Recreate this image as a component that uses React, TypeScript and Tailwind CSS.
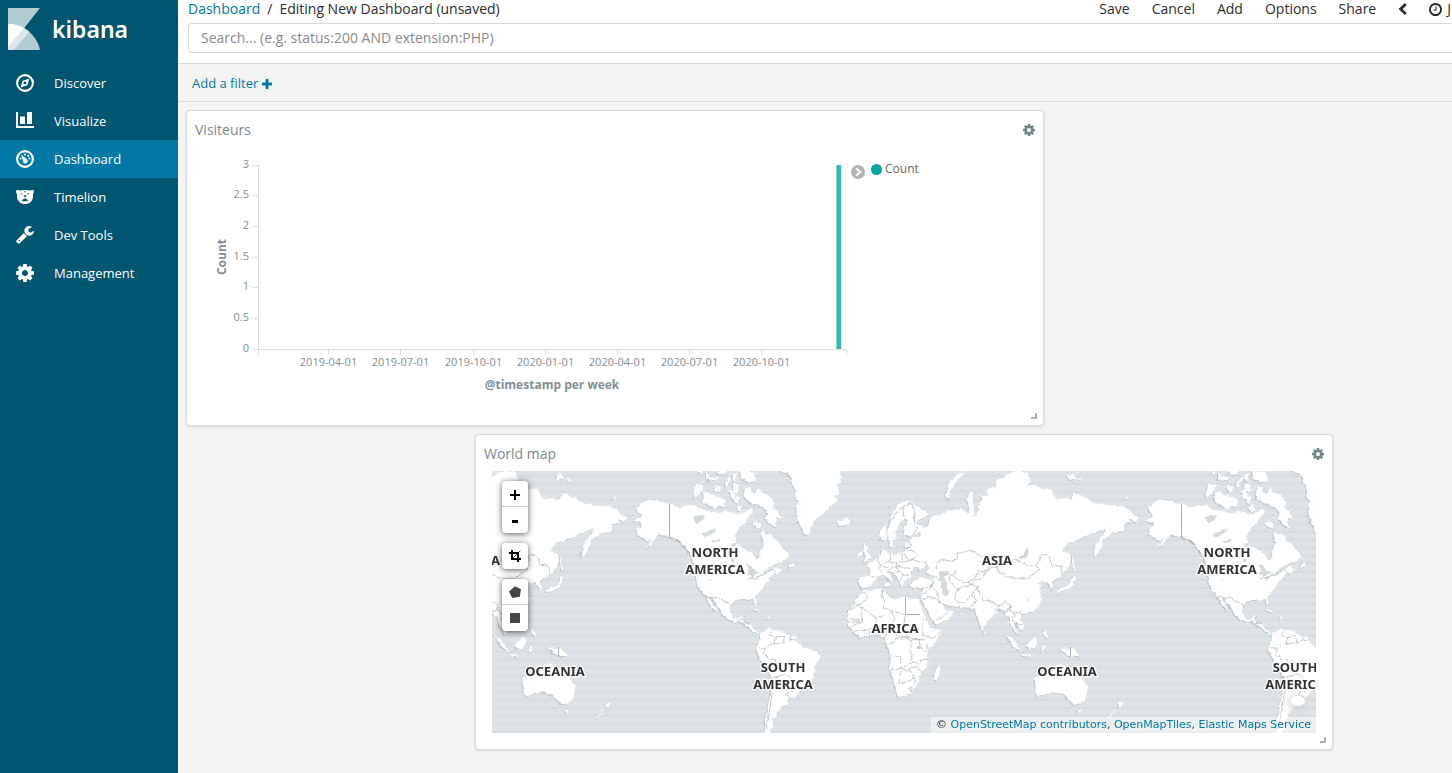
import React from "react";

const LOGO = (
  <svg width="32" height="42" viewBox="0 0 32 42" aria-hidden="true" className="shrink-0">
    <path d="M0 0H32L16.3 20C11.5 17 6 15.5 0 15.5Z" fill="#b2ccd4" />
    <path d="M0 15.5C6 15.5 11.5 17 16.3 20C24 25 30.5 33 32 42H0Z" fill="#b2ccd4" />
    <path d="M16.3 20L21.5 23.8L6 42H0V38Z" fill="#d9e6ea" />
    <path d="M0 15.5C6 15.5 11.5 17 16.3 20L0 39Z" fill="#fff" />
  </svg>
);

const GEAR =
  "M1024 896q0-106-75-181t-181-75-181 75-75 181 75 181 181 75 181-75 75-181zm512-109v222q0 12-8 23t-20 13l-185 28q-19 54-39 91 35 50 107 138 10 12 10 25t-9 23q-27 37-99 108t-94 71q-12 0-26-9l-138-108q-44 23-91 38-16 136-29 186-7 28-36 28h-222q-14 0-24.5-8.5t-11.5-21.5l-28-184q-49-16-90-37l-141 107q-10 9-25 9-14 0-25-11-126-114-165-168-7-10-7-23 0-12 8-23 15-21 51-66.5t54-70.5q-27-50-41-99l-183-27q-13-2-21-12.5t-8-23.5v-222q0-12 8-23t19-13l186-28q14-46 39-92-40-57-107-138-10-12-10-24 0-10 9-23 26-36 98.5-107.5t94.5-71.5q13 0 26 10l138 107q44-23 91-38 16-136 29-186 7-28 36-28h222q14 0 24.5 8.5t11.5 21.5l28 184q49 16 90 37l142-107q9-9 24-9 13 0 25 10 129 119 165 170 7 8 7 22 0 12-8 23-15 21-51 66.5t-54 70.5q26 50 41 98l183 28q13 2 21 12.5t8 23.5z";

const CLOCK =
  "M896 544v448q0 14-9 23t-23 9h-320q-14 0-23-9t-9-23v-64q0-14 9-23t23-9h224v-352q0-14 9-23t23-9h64q14 0 23 9t9 23zm416 352q0-148-73-273t-198-198-273-73-273 73-198 198-73 273 73 273 198 198 273 73 273-73 198-198 73-273zm224 0q0 209-103 385.5t-279.5 279.5-385.5 103-385.5-103-279.5-279.5-103-385.5 103-385.5 279.5-279.5 385.5-103 385.5 103 279.5 279.5 103 385.5z";

const WRENCH =
  "M384 1472q0-26-19-45t-45-19-45 19-19 45 19 45 45 19 45-19 19-45zm644-420l-682 682q-37 37-90 37-52 0-91-37l-106-108q-38-36-38-90 0-53 38-91l681-681q39 98 114.5 173.5t173.5 114.5zm634-435q0 39-23 106-47 134-164.5 217.5t-258.5 83.5q-185 0-316.5-131.5t-131.5-316.5 131.5-316.5 316.5-131.5q58 0 121.5 16.5t107.5 46.5q16 11 16 28t-16 28l-293 169v224l193 107q5-3 79-48.5t135.5-81 70.5-35.5q15 0 23.5 10t8.5 25z";

function GearIcon({ size }: { size: number }) {
  return (
    <svg width={size} height={size} viewBox="0 128 1536 1536" fill="currentColor" aria-hidden="true">
      <path d={GEAR} />
    </svg>
  );
}

const NAV: { label: string; icon: React.ReactNode; active?: boolean }[] = [
  {
    label: "Discover",
    icon: (
      <svg width="18" height="18" viewBox="0 0 18 18" aria-hidden="true">
        <circle cx="9" cy="9" r="7.9" fill="none" stroke="#fff" strokeWidth="2.1" />
        <path fillRule="evenodd" fill="#fff" d="M13.4 4.4L11.4 11.2L4.6 13.6L6.6 6.8ZM9 7.6A1.4 1.4 0 1 0 9 10.4A1.4 1.4 0 1 0 9 7.6Z" />
      </svg>
    ),
  },
  {
    label: "Visualize",
    icon: (
      <svg width="18" height="18" viewBox="0 0 18 18" fill="#fff" aria-hidden="true">
        <path d="M0 0H2V14H18V16H0ZM4 4.5H9V12H4ZM11 0H16V12H11Z" />
      </svg>
    ),
  },
  {
    label: "Dashboard",
    active: true,
    icon: (
      <svg width="18" height="18" viewBox="0 0 18 18" aria-hidden="true">
        <circle cx="9" cy="9" r="7.9" fill="none" stroke="#fff" strokeWidth="2.1" />
        <g fill="#fff">
          <path d="M5.2 4.4L10.8 9.2A2.4 2.4 0 1 1 7 11Z" />
          <circle cx="9" cy="4.6" r="1" />
          <circle cx="12.2" cy="5.8" r="1.1" />
          <circle cx="13.4" cy="8.6" r="1" />
          <circle cx="4.7" cy="8.4" r="1" />
        </g>
      </svg>
    ),
  },
  {
    label: "Timelion",
    icon: (
      <svg width="18" height="18" viewBox="0 0 18 18" aria-hidden="true">
        <path fill="#fff" d="M0 3.2C0 1.8 2.2 1.6 3.8 2.6C7 1.9 11 1.9 14.2 2.6C15.8 1.6 18 1.8 18 3.2C18 4.6 17.2 5.6 17 6.5C17.4 9.6 16.6 12.4 14.6 14C13 15.4 11 16 9 16C7 16 5 15.4 3.4 14C1.4 12.4 .6 9.6 1 6.5C.8 5.6 0 4.6 0 3.2Z" />
        <g fill="#005571">
          <path d="M4.8 4.9L6.8 5.8L6.4 6.6L4.6 5.7ZM13.2 4.9L11.2 5.8L11.6 6.6L13.4 5.7ZM7.4 7.2H10.6L9.4 9.2H8.6ZM9 10.4C10.4 10.4 11.8 11.6 12 13.2H6C6.2 11.6 7.6 10.4 9 10.4Z" />
          <path d="M8 3.2H10L9 4.4Z" />
        </g>
      </svg>
    ),
  },
  {
    label: "Dev Tools",
    icon: (
      <svg width="18" height="18" viewBox="0 128 1664 1664" fill="#fff" aria-hidden="true">
        <path d={WRENCH} />
      </svg>
    ),
  },
  { label: "Management", icon: <GearIcon size={18} /> },
];

const ACTIONS = ["Save", "Cancel", "Add", "Options", "Share"];

const Y_TICKS = [
  { y: 165.5, label: "3" },
  { y: 195.5, label: "2.5" },
  { y: 226.5, label: "2" },
  { y: 257.5, label: "1.5" },
  { y: 287.5, label: "1" },
  { y: 318.5, label: "0.5" },
  { y: 349.5, label: "0" },
];

const X_TICKS = [
  { x: 328.5, label: "2019-04-01" },
  { x: 400.5, label: "2019-07-01" },
  { x: 473.5, label: "2019-10-01" },
  { x: 545.5, label: "2020-01-01" },
  { x: 617.5, label: "2020-04-01" },
  { x: 689.5, label: "2020-07-01" },
  { x: 761.5, label: "2020-10-01" },
];

function VisitorsChart() {
  return (
    <svg width="653" height="250" viewBox="195 151 653 250" role="img" aria-label="Count per week" className="shrink-0">
      <g stroke="#dcdcdc" fill="none">
        <path d="M258.5 165V355M258 349.5H846.5V355" />
        {Y_TICKS.map((t) => (
          <path key={t.label} d={`M252 ${t.y}H258`} />
        ))}
        {X_TICKS.map((t) => (
          <path key={t.label} d={`M${t.x} 350V355`} />
        ))}
      </g>
      <rect x="836.4" y="165" width="4.8" height="184" fill="#33b9b1" />
      <g fontSize="11" fill="#848e96">
        {Y_TICKS.map((t) => (
          <text key={t.label} x="249" y={t.y + 2.5} textAnchor="end">
            {t.label}
          </text>
        ))}
        {X_TICKS.map((t) => (
          <text key={t.label} x={t.x} y="366" textAnchor="middle">
            {t.label}
          </text>
        ))}
      </g>
      <g fontSize="12" fontWeight="700" fill="#848e96" textAnchor="middle">
        <text x="552" y="389">@timestamp per week</text>
        <text transform="translate(226 257) rotate(-90)">Count</text>
      </g>
    </svg>
  );
}

const AMERICAS = [
  "M148 118L128 112L108 108L90 104L74 108L62 118L56 126L46 130L56 142L66 150L60 158L40 166L48 170L62 174L66 184L52 190L50 206L60 214L72 222L82 228L96 220L84 238L66 252L92 240L110 216L118 208L134 214L148 216L162 226L172 224L190 240L206 262L216 282L224 296L228 330L230 356L240 376L252 386L258 396L268 416L284 436L292 442L280 420L268 398L276 398L288 416L300 434L308 450L322 462L344 470L358 468L372 478L388 490L400 500L418 506L410 498L398 490L392 478L380 476L370 474L366 466L378 450L360 456L352 464L338 456L330 440L332 424L340 412L356 406L376 404L392 404L400 402L406 422L411 414L404 396L418 380L430 370L434 358L446 348L450 338L462 326L474 324L486 316L478 312L474 304L456 312L440 326L420 330L434 318L450 306L470 296L496 288L510 274L504 262L486 250L476 232L462 226L452 208L440 210L432 200L424 206L430 230L424 250L418 262L418 280L408 284L400 268L384 256L366 248L350 238L344 220L350 200L362 184L376 172L384 158L398 142L396 130L380 138L364 146L348 150L336 142L316 138L300 146L280 140L256 136L240 130L226 122L204 120L186 126L168 126Z",
  "M246 84L262 80L276 92L300 96L318 108L312 126L296 122L284 132L268 120L250 112Z",
  "M228 56L250 60L248 76L232 92L222 98L220 82Z",
  "M376 66L392 66L394 82L404 86L414 68L422 82L440 88L456 100L462 116L458 130L472 136L482 160L466 160L472 190L456 180L448 172L436 160L444 146L432 130L414 120L398 116L380 104L370 92Z",
  "M360 18L400 22L408 48L386 52L364 42Z",
  "M328 78L342 74L348 104L332 98ZM312 60L330 30L332 42L318 66ZM258 20L272 36L296 36L290 46L258 44ZM234 18L250 18L246 28ZM290 18L320 18L314 26L296 28ZM338 56L356 58L352 84L342 80ZM346 96L358 94L352 118L344 112ZM286 60L304 66L298 82L284 72ZM338 28L350 26L346 50L338 46Z",
  "M398 174L410 168L424 176L420 188L406 186ZM352 128L364 120L366 138L354 138Z",
  "M506 300L516 292L522 304L508 308Z",
  "M652 164L664 168L684 158L690 172L672 184L656 178Z",
  "M478 14L484 22L500 24L512 36L520 60L526 80L522 96L536 106L528 120L530 150L540 180L556 210L566 212L572 186L582 168L604 152L616 140L636 124L652 108L646 96L656 84L656 70L650 60L662 50L662 14Z",
  "M392 426L410 434L430 444L412 440ZM440 452L454 458L444 462Z",
  "M0 152L12 152L20 160L10 170L0 166Z",
  "M420 504L432 500L446 490L456 496L480 494L492 504L508 512L524 516L534 534L550 548L572 554L590 560L600 572L598 584L584 604L582 632L574 656L560 668L540 676L528 692L514 700L504 702L504 716L486 724L478 738L466 744L470 756L456 764L460 780L450 800L456 812L430 812L436 792L434 764L440 744L444 720L450 690L452 660L456 640L446 622L432 610L424 590L414 566L408 552L414 536L420 520Z",
].join("");

const AMERICAN_LAKES =
  "M218 156L236 150L256 152L248 166L230 174L222 166ZM244 206L262 200L276 192L292 194L278 204L262 212L248 214ZM274 226L302 222L296 230L276 230ZM336 236L350 236L346 246L338 244ZM336 280L344 282L342 292L337 290ZM376 296L392 302L404 314L416 326L402 330L396 342L390 326L382 334L386 314ZM404 336L420 332L410 342L400 344ZM266 342L276 346L272 350Z";

const OLD_WORLD = [
  "M118 200L122 222L134 228L144 222L150 246L158 246L160 230L170 222L166 204L176 180L192 160L204 166L196 184L190 208L206 214L222 210L244 200L240 212L212 220L210 232L196 234L196 246L190 262L170 266L150 268L136 260L128 244L126 264L116 270L104 286L80 300L90 310L88 332L60 336L56 352L62 368L78 370L92 362L102 346L114 334L128 328L140 338L156 354L158 346L146 330L142 322L152 318L166 330L178 346L184 366L190 352L200 344L212 336L214 322L222 308L232 306L236 316L248 312L262 300L264 312L258 322L282 334L280 344L262 342L240 340L214 350L210 362L226 368L246 370L246 386L242 404L252 416L262 434L274 460L286 480L304 474L328 462L342 442L330 434L324 440L310 430L302 414L316 418L334 424L360 426L386 428L396 436L404 430L410 452L418 476L426 500L434 482L446 468L466 446L476 434L490 436L500 456L508 454L512 476L530 508L536 508L524 488L522 470L536 486L548 494L552 480L540 462L540 446L556 446L580 440L598 420L606 402L598 380L604 360L592 356L606 350L620 352L632 370L640 376L636 354L650 340L666 330L686 306L692 286L690 268L666 260L680 236L714 224L760 205L798 190L790 210L780 220L766 240L762 260L764 280L780 256L788 240L788 226L820 205L850 200L854 178L874 172L870 162L888 172L896 160L880 150L866 132L840 122L820 124L790 118L760 112L740 100L720 90L700 84L694 104L670 100L650 104L638 90L630 72L600 70L574 58L562 62L572 40L560 22L530 16L500 30L470 46L464 66L444 70L440 92L422 90L424 110L414 130L412 148L398 158L402 130L398 104L400 84L388 80L382 100L386 124L386 150L366 130L330 138L310 142L286 152L270 156L266 176L262 186L252 188L236 180L228 172L240 160L258 158L264 146L244 130L222 118L206 106L190 112L176 118L164 136L152 154L146 176L132 186Z",
  "M70 374L84 378L104 372L132 370L134 386L148 398L170 404L190 394L216 402L236 402L242 420L250 444L260 466L272 492L306 494L300 514L280 536L262 556L262 604L240 624L236 650L222 668L208 686L180 696L172 694L166 664L158 640L148 612L152 580L146 552L136 536L134 516L104 508L62 518L40 502L24 478L22 456L28 436L46 412L54 394Z",
  "M72 232L80 244L84 262L94 276L88 286L70 290L76 272L70 256ZM56 264L68 258L66 272L54 276Z",
  "M380 18L356 26L334 46L320 72L318 96L330 104L328 84L342 58L362 36Z",
  "M650 382L664 380L686 372L700 360L706 336L698 332L694 350L680 364L656 374ZM698 268L702 300L706 320L700 316L696 290Z",
  "M498 508L520 526L540 552L542 562L524 550L510 528ZM546 568L574 570L570 575L548 573ZM558 542L568 530L584 516L594 530L584 550L566 550ZM604 544L614 540L606 566ZM610 486L618 500L626 520L612 508ZM562 398L568 402L564 412Z",
  "M656 546L676 552L700 550L722 576L704 572L690 574L674 564Z",
  "M582 640L586 660L588 690L594 696L616 688L640 682L668 686L686 704L700 716L720 716L736 698L744 676L740 660L728 644L716 632L710 608L700 626L686 616L670 596L650 600L640 606L624 620L600 630ZM710 734L722 736L716 748Z",
  "M836 710L852 718L838 730ZM832 728L810 756L800 762L818 742Z",
  "M282 630L290 610L300 600L300 620L290 648L282 644ZM432 498L438 504L434 510Z",
  "M682 32L700 26L708 40L690 46ZM716 42L730 44L722 48ZM856 94L866 98L858 104ZM130 366L140 352L150 358L142 364Z",
].join("");

const OLD_WORLD_LAKES =
  "M300 322L318 316L326 328L312 338L322 352L320 366L328 382L320 394L306 384L306 362L298 344ZM340 318L350 314L348 328L342 328ZM530 280L548 270L562 250L568 256L560 274L544 284ZM232 544L244 542L240 552L230 552ZM216 560L222 570L220 578L216 570ZM408 318L424 314L418 322Z";

const BORDERS_AMERICAS =
  "M148 216L170 224L188 240L206 264M256 396L272 398L298 398L312 410L326 414L336 426M358 468L366 460L378 452M372 476L388 474M384 342L404 338L430 328L446 320L456 310L464 322M456 498L448 510L466 518L462 536L444 540L436 550L414 548M466 518L490 514L494 532L478 536L462 536M494 532L512 524L526 528M510 512L512 530M436 550L430 566L448 582L466 584L470 600M450 640L470 634L484 632L500 626L514 640M470 634L466 660L456 690L448 740L440 790M500 654L510 670L522 684M502 678L500 694L514 698";

const BORDERS_OLD_WORLD =
  "M140 222L142 184L156 162L172 138L188 126L192 160M188 126L210 112L222 130L224 172L230 190L220 208M192 250L204 252L212 244L208 228M190 262L200 278L216 284L230 274L220 256L204 252M150 268L152 290L140 292L118 300M116 270L112 286L118 300L116 312L130 322M152 290L170 296L188 290L186 266M170 296L168 306L182 304L194 310L212 306M188 290L206 288L218 284L234 290L256 290L262 302M142 318L156 308L168 306L180 318L188 330L206 332M180 318L164 322M188 330L180 344M128 308L146 306M90 332L104 336M282 334L300 344M280 346L276 364L264 368L246 370M276 364L290 380L296 404L302 414M246 386L262 380L276 364M246 404L264 394L290 404L302 414M286 466L306 456L328 440M290 316L288 296L304 282L336 290L350 282L348 268L388 256L422 272L440 286L456 306L436 316L410 328L402 340L384 352L362 348L340 330L328 330L330 348L352 374L344 400L360 426M352 374L374 364L396 358L412 366L396 390L372 414L356 412M384 352L396 358L402 346L430 338L440 318L470 306L480 324L520 340L560 342L600 312L584 302L600 288L604 270L624 268L636 300L662 304L666 330M456 306L480 304L510 296L524 282L544 294L566 302L584 302M412 366L418 388L434 404L460 414L480 422L496 410L512 420L502 440L490 436M396 390L408 404L390 430M460 414L466 440M480 422L470 430L482 442M512 420L510 438L524 452L518 464L528 480L548 478M510 438L524 444L546 440M636 354L650 342M64 382L80 386L82 404L58 416L24 440M46 414L64 428L108 458L140 450L156 438L196 448M130 370L126 390L134 410L132 430L156 438M64 428L68 470L24 472M108 458L106 486L84 490L62 500L40 500M156 438L164 464L148 496L134 516M196 448L190 490L200 516L232 524L254 524M250 460L244 490L250 512L280 520L304 500M148 496L170 510L200 516M140 536L160 534L168 520L200 518L216 530L212 570L220 592L236 598L242 582L262 584M152 572L180 572L184 596L184 614L148 614M184 614L200 602L216 592M184 614L206 616L222 606L236 608L244 622M170 660L178 650L180 618M178 650L190 656L208 648L222 632L206 616M222 632L228 650L222 660M212 666L204 672L210 678L216 672ZM66 500L84 490L90 514M98 486L104 508M118 480L116 510M216 530L220 524L240 524L236 548L256 560M262 536L264 552M28 460L66 470M34 484L66 470";

function WorldMap() {
  return (
    <svg
      viewBox="0 0 824 262"
      preserveAspectRatio="xMinYMin slice"
      className="block h-full w-full"
      role="img"
      aria-label="World map"
    >
      <defs>
        <pattern id="waves" width="9.14" height="8" patternUnits="userSpaceOnUse">
          <path d="M-1 5.6Q2.5 5.8 4.2 3.4Q5.6 5.6 10.2 5.4" fill="none" stroke="#d5dbde" strokeWidth="1.6" />
        </pattern>
        <filter id="rough" x="-5%" y="-5%" width="110%" height="110%" colorInterpolationFilters="sRGB">
          <feTurbulence type="fractalNoise" baseFrequency="0.22" numOctaves="2" seed="4" />
          <feDisplacementMap in="SourceGraphic" scale="4" xChannelSelector="R" yChannelSelector="G" />
        </filter>
        <g id="americas" transform="translate(128 -6) scale(.33333)">
          <path d={AMERICAS} fill="#c0c8cd" transform="translate(-3 3)" />
          <path d={AMERICAS} fill="#fff" />
          <path d={AMERICAN_LAKES} fill="#d2d9dd" />
          <path d={BORDERS_AMERICAS} fill="none" stroke="#a9aaab" strokeWidth="2" />
        </g>
        <g id="old-world" transform="translate(348 -6) scale(.33333)">
          <path d={OLD_WORLD} fill="#c0c8cd" transform="translate(-3 3)" />
          <path d={OLD_WORLD} fill="#fff" />
          <path d={OLD_WORLD_LAKES} fill="#d2d9dd" />
          <path d={BORDERS_OLD_WORLD} fill="none" stroke="#a9aaab" strokeWidth="2" />
        </g>
        <g id="straight-borders" fill="none" stroke="#b0b1b2">
          <path d="M177.5 33V66" />
          <path d="M413.5 126V143.5H428M66.5 176V186" />
        </g>
        <radialGradient id="smudge">
          <stop offset="0" stopColor="#b9bfc4" stopOpacity=".7" />
          <stop offset="1" stopColor="#e9dfe2" stopOpacity="0" />
        </radialGradient>
      </defs>
      <rect width="824" height="262" fill="#dde3e6" />
      <rect width="824" height="262" fill="url(#waves)" />
      <g filter="url(#rough)">
        <use href="#americas" />
        <use href="#americas" x="512" />
        <use href="#old-world" />
        <use href="#old-world" x="-512" />
      </g>
      <use href="#straight-borders" />
      <use href="#straight-borders" x="512" />
      <circle cx="804" cy="232" r="15" fill="url(#smudge)" />
      <ellipse cx="806" cy="230" rx="7" ry="5" fill="#fff" />
      <g
        fontFamily="'Noto Sans', sans-serif"
        fontSize="13"
        fontWeight="700"
        fill="#333"
        stroke="#fff"
        strokeWidth="3"
        strokeLinejoin="round"
        strokeOpacity=".85"
        textAnchor="middle"
        paintOrder="stroke"
      >
        {[0, 512].map((dx) => (
          <React.Fragment key={dx}>
            <text x={223 + dx} y="86">NORTH</text>
            <text x={223 + dx} y="103">AMERICA</text>
            <text x={291 + dx} y="201">SOUTH</text>
            <text x={291 + dx} y="218">AMERICA</text>
            <text x={63 + dx} y="205">OCEANIA</text>
            <text x={dx - 7} y="94">ASIA</text>
          </React.Fragment>
        ))}
        <text x="403" y="162">AFRICA</text>
      </g>
    </svg>
  );
}

function Panel({ title, className, children }: { title: string; className: string; children: React.ReactNode }) {
  return (
    <section className={`relative flex flex-col rounded border border-[#d9d9d9] bg-white shadow-[0_1px_3px_rgba(0,0,0,0.12)] ${className}`}>
      <header className="flex h-9 items-center justify-between px-2 pt-0.5">
        <h2 className="text-sm text-[#7b8a8b]">{title}</h2>
        <button type="button" aria-label={`${title} panel options`} className="text-[#738585]">
          <GearIcon size={12} />
        </button>
      </header>
      {children}
      <span className="absolute right-1.5 bottom-1.5 size-1.5 border-r-2 border-b-2 border-[#b0b0b0]" />
    </section>
  );
}

const MAP_BUTTON = "flex h-[26px] w-[26px] items-center justify-center text-black";
const MAP_GROUP = "flex flex-col divide-y divide-[#ccc] overflow-hidden rounded bg-white shadow-[0_1px_6px_rgba(0,0,0,0.65)]";

function MapControls() {
  return (
    <div className="absolute top-2.5 left-2.5 flex flex-col gap-2.5">
      <div className={MAP_GROUP}>
        <button type="button" aria-label="Zoom in" className={MAP_BUTTON}>
          <svg width="10" height="12" viewBox="0 0 10 12" aria-hidden="true">
            <path d="M5 2V12M0 7H10" stroke="#000" strokeWidth="2" />
          </svg>
        </button>
        <button type="button" aria-label="Zoom out" className={MAP_BUTTON}>
          <svg width="10" height="12" viewBox="0 0 10 12" aria-hidden="true">
            <path d="M2 7.5H8" stroke="#000" strokeWidth="3" />
          </svg>
        </button>
      </div>
      <div className={MAP_GROUP}>
        <button type="button" aria-label="Fit data bounds" className={MAP_BUTTON}>
          <svg width="12" height="12" viewBox="0 0 12 12" aria-hidden="true" fill="none" stroke="#000">
            <path d="M0 3H9V12M3 0V9H12" strokeWidth="1.9" />
            <path d="M3.5 8.5L11.5 .5" strokeWidth=".7" />
          </svg>
        </button>
      </div>
      <div className={MAP_GROUP}>
        <button type="button" aria-label="Draw a polygon" className={MAP_BUTTON}>
          <svg width="12" height="12" viewBox="0 0 12 12" aria-hidden="true">
            <path d="M6 .2L12 3.2L10.8 10.8L3.2 12L0 5.4Z" fill="#464646" />
          </svg>
        </button>
        <button type="button" aria-label="Draw a rectangle" className={MAP_BUTTON}>
          <svg width="10" height="10" viewBox="0 0 10 10" aria-hidden="true">
            <path d="M0 0H10V10H0Z" fill="#464646" />
          </svg>
        </button>
      </div>
    </div>
  );
}

export default function App() {
  return (
    <div className="flex min-h-screen overflow-hidden bg-[#f4f4f4] font-['Open_Sans',sans-serif] text-sm text-[#2d2d2d]">
      <nav aria-label="Main" className="w-[178px] shrink-0 bg-[#005571] text-white">
        <a href="#home" className="flex h-16 items-start gap-3 px-2 pt-2">
          {LOGO}
          <span className="pt-1 font-['Noto_Sans',sans-serif] text-[23px] leading-[34px] font-semibold">kibana</span>
        </a>
        <ul>
          {NAV.map((item) => (
            <li key={item.label}>
              <a
                href={`#${item.label}`}
                className={`flex h-[38px] items-center gap-5 pl-4 text-[13px] ${item.active ? "bg-[#0079a5]" : ""}`}
              >
                {item.icon}
                {item.label}
              </a>
            </li>
          ))}
        </ul>
      </nav>

      <div className="flex min-w-0 flex-1 flex-col">
        <header className="border-b border-[#d9d9d9] bg-white pb-2.5 pl-2.5">
          <div className="flex h-[23px] items-start justify-between leading-[18px]">
            <div className="flex gap-[7px]">
              <a href="#dashboards" className="text-[#0079a5]">Dashboard</a>
              <span>/</span>
              <span>Editing New Dashboard (unsaved)</span>
            </div>
            <div className="flex items-center gap-[22px] pr-px">
              {ACTIONS.map((a) => (
                <button key={a} type="button">{a}</button>
              ))}
              <button type="button" aria-label="Previous period">
                <svg width="9" height="12" viewBox="0 0 9 12" aria-hidden="true">
                  <path d="M7.8 1L2.6 6L7.8 11" fill="none" stroke="#2d2d2d" strokeWidth="2.8" />
                </svg>
              </button>
              <button type="button" className="flex items-center gap-[5px]">
                <svg width="13" height="13" viewBox="0 128 1536 1536" fill="currentColor" aria-hidden="true">
                  <path d={CLOCK} />
                </svg>
                J
              </button>
            </div>
          </div>
          <input
            type="text"
            aria-label="Search"
            placeholder="Search... (e.g. status:200 AND extension:PHP)"
            className="block h-[30px] w-full rounded-l border border-r-0 border-[#d9d9d9] bg-white px-3 pb-0.5 text-sm placeholder:text-[#8a8a8a]"
          />
        </header>

        <div className="flex h-[38px] items-center border-b border-[#d9d9d9] px-3.5 pt-0.5">
          <button type="button" className="flex items-center gap-1 text-[13px] text-[#0079a5]">
            Add a filter
            <svg width="10" height="10" viewBox="0 0 10 10" aria-hidden="true">
              <path d="M5 .8V9.2M.8 5H9.2" stroke="currentColor" strokeWidth="2.8" strokeLinecap="round" />
            </svg>
          </button>
        </div>

        <main className="grid grid-cols-4 gap-x-[9px] gap-y-2 pt-2 pr-[119px] pb-6 pl-2">
          <Panel title="Visiteurs" className="col-span-3 h-[316px]">
            <div className="flex items-start px-2 pt-1">
              <VisitorsChart />
              <div className="flex items-start gap-1.5 pt-1.5 pl-[3px]">
                <button type="button" aria-label="Toggle legend" className="pt-2">
                  <svg width="14" height="14" viewBox="0 0 14 14" aria-hidden="true">
                    <circle cx="7" cy="7" r="7" fill="#b3b3b3" />
                    <path d="M5.2 3.2L9 7L5.2 10.8" fill="none" stroke="#fff" strokeWidth="2.2" />
                  </svg>
                </button>
                <div className="flex items-center gap-[3px] pt-[3px] text-xs leading-[18px] text-[#666]">
                  <span className="size-[11px] rounded-full bg-[#00a69b]" />
                  Count
                </div>
              </div>
            </div>
          </Panel>

          <Panel title="World map" className="col-span-3 col-start-2 h-[316px]">
            <div className="relative mx-4 h-[262px] overflow-hidden">
              <WorldMap />
              <MapControls />
              <div className="absolute right-0 bottom-0 bg-white/50 px-[5px] font-['DejaVu_Sans',sans-serif] text-[11px] leading-4 text-[#333]">
                © <a href="#osm" className="text-[#0079a5]">OpenStreetMap contributors</a>,{" "}
                <a href="#omt" className="text-[#0079a5]">OpenMapTiles</a>,{" "}
                <a href="#ems" className="text-[#0079a5]">Elastic Maps Service</a>
              </div>
            </div>
          </Panel>
        </main>
      </div>
    </div>
  );
}
